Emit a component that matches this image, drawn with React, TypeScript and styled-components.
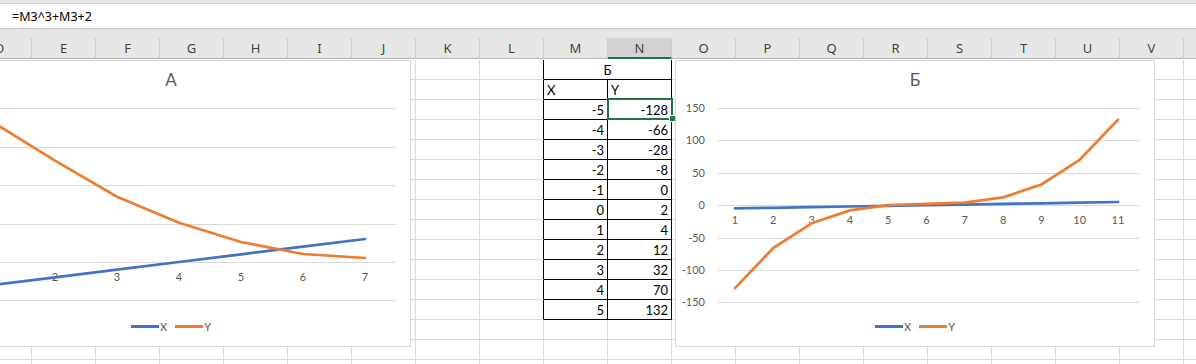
import React from "react";
import styled, { createGlobalStyle } from "styled-components";

const GlobalStyle = createGlobalStyle`
  html, body { margin: 0; padding: 0; background: #ffffff; overflow: hidden; }
  #root { width: 1196px; height: 364px; overflow: hidden; }
`;

const BLUE = "#4472c4";
const ORANGE = "#ed7d31";
const GREEN = "#217346";

const COLS = ["D", "E", "F", "G", "H", "I", "J", "K", "L", "M", "N", "O", "P", "Q", "R", "S", "T", "U", "V", "W"];
const ROW_COUNT = 16;
const SELECTED_COL = "N";

const Window = styled.div`
  width: 1196px;
  height: 364px;
  display: flex;
  flex-direction: column;
  background: #e6e6e6;
  overflow: hidden;
  font-family: "Noto Sans", "Liberation Sans", sans-serif;
`;

const FormulaBar = styled.div`
  box-sizing: border-box;
  margin-top: 3px;
  height: 26px;
  background: #ffffff;
  border-top: 1px solid #d4d4d4;
  border-bottom: 1px solid #c6c6c6;
  display: flex;
  align-items: center;
  padding-left: 12px;
  font-size: 12.5px;
  color: #000;
`;

const HeaderRow = styled.div`
  margin-top: 9px;
  display: flex;
  margin-left: -32px;
`;

const HeaderCell = styled.div<{ $selected?: boolean }>`
  box-sizing: border-box;
  flex: 0 0 64px;
  height: 21px;
  display: flex;
  align-items: center;
  justify-content: center;
  font-size: 13px;
  color: #444444;
  background: ${(p) => (p.$selected ? "#d2d2d2" : "#e6e6e6")};
  border-right: 1px solid #cdcdcd;
  border-bottom: ${(p) => (p.$selected ? `2px solid ${GREEN}` : "1px solid #b9b9b9")};
  padding-top: ${(p) => (p.$selected ? "1px" : "0")};
`;

const GridArea = styled.div`
  position: relative;
  flex: 1;
  background: #ffffff;
  padding-top: 1px;
  overflow: hidden;
`;

const Grid = styled.div`
  display: grid;
  grid-template-columns: repeat(${COLS.length}, 64px);
  grid-auto-rows: 20px;
  margin-left: -32px;
`;

const Cell = styled.div<{
  $align?: "left" | "right" | "center";
  $darkRight?: boolean;
  $darkBottom?: boolean;
  $span?: number;
  $selected?: boolean;
}>`
  box-sizing: border-box;
  position: relative;
  grid-column: span ${(p) => p.$span ?? 1};
  display: flex;
  align-items: flex-end;
  justify-content: ${(p) => (p.$align === "right" ? "flex-end" : p.$align === "center" ? "center" : "flex-start")};
  padding: 0 3px 1px 3px;
  font-family: Lato, "Liberation Sans", sans-serif;
  font-size: 13px;
  line-height: 16px;
  color: #000;
  border-right: 1px solid ${(p) => (p.$darkRight ? "#000" : "#dadada")};
  border-bottom: 1px solid ${(p) => (p.$darkBottom ? "#000" : "#dadada")};

  ${(p) =>
    p.$selected &&
    `
    &::after {
      content: "";
      position: absolute;
      left: -1px;
      top: -2px;
      right: -2px;
      bottom: -1px;
      border: 2px solid ${GREEN};
      z-index: 2;
      pointer-events: none;
    }
    &::before {
      content: "";
      position: absolute;
      box-sizing: border-box;
      width: 7px;
      height: 7px;
      right: -5px;
      bottom: -3px;
      background: ${GREEN};
      border: 1px solid #ffffff;
      z-index: 3;
    }
  `}
`;

/* ---------- chart ---------- */

const ChartFrame = styled.div<{ $left: number }>`
  position: absolute;
  top: 1px;
  left: ${(p) => p.$left}px;
  box-sizing: border-box;
  width: 480px;
  height: 287px;
  background: #ffffff;
  border: 1px solid #d9d9d9;
  padding-top: 9px;
  display: flex;
  flex-direction: column;
  align-items: center;
  z-index: 4;
  font-family: Lato, "Liberation Sans", sans-serif;
`;

const ChartTitle = styled.div`
  height: 20px;
  line-height: 20px;
  font-size: 17px;
  color: #595959;
`;

const PlotSvg = styled.svg`
  display: block;
  flex: 0 0 auto;
`;

const Legend = styled.div`
  margin-top: 8px;
  height: 16px;
  display: flex;
  align-items: center;
  gap: 8px;
  font-size: 11px;
  color: #595959;
`;

const LegendItem = styled.div`
  display: flex;
  align-items: center;
  gap: 1px;
`;

const Swatch = styled.span<{ $color: string }>`
  display: inline-block;
  width: 28px;
  height: 3px;
  background: ${(p) => p.$color};
`;

type Series = { name: string; color: string; values: number[] };

type ChartSpec = {
  title: string;
  left: number;
  categories: string[];
  x0: number;
  step: number;
  zeroY: number;
  pxPerUnit: number;
  grid: number[];
  gridX1: number;
  gridX2: number;
  valueLabels: boolean;
  labelX: number;
  series: Series[];
};

const PLOT_W = 478;
const PLOT_H = 220;

function Chart({ spec }: { spec: ChartSpec }) {
  const xOf = (i: number) => spec.x0 + spec.step * i;
  const yOf = (v: number) => spec.zeroY - v * spec.pxPerUnit;
  return (
    <ChartFrame $left={spec.left}>
      <ChartTitle>{spec.title}</ChartTitle>
      <PlotSvg width={PLOT_W} height={PLOT_H} viewBox={`0 0 ${PLOT_W} ${PLOT_H}`}>
        {spec.grid.map((g) => (
          <line
            key={`g${g}`}
            x1={spec.gridX1}
            x2={spec.gridX2}
            y1={Math.round(yOf(g)) + 0.5}
            y2={Math.round(yOf(g)) + 0.5}
            stroke="#d9d9d9"
            strokeWidth={1}
          />
        ))}
        {spec.valueLabels &&
          spec.grid.map((g) => (
            <text
              key={`v${g}`}
              x={spec.labelX}
              y={yOf(g) + 4}
              textAnchor="end"
              fontSize={11}
              fill="#595959"
              fontFamily="Lato, 'Liberation Sans', sans-serif"
            >
              {g}
            </text>
          ))}
        {spec.categories.map((c, i) => (
          <text
            key={`c${c}`}
            x={xOf(i)}
            y={spec.zeroY + 19}
            textAnchor="middle"
            fontSize={11}
            fill="#595959"
            fontFamily="Lato, 'Liberation Sans', sans-serif"
          >
            {c}
          </text>
        ))}
        {spec.series.map((s) => (
          <polyline
            key={s.name}
            points={s.values.map((v, i) => `${xOf(i).toFixed(1)},${yOf(v).toFixed(1)}`).join(" ")}
            fill="none"
            stroke={s.color}
            strokeWidth={2.75}
            strokeLinecap="round"
            strokeLinejoin="round"
          />
        ))}
      </PlotSvg>
      <Legend>
        {spec.series.map((s) => (
          <LegendItem key={s.name}>
            <Swatch $color={s.color} />
            <span>{s.name}</span>
          </LegendItem>
        ))}
      </Legend>
    </ChartFrame>
  );
}

const chartA: ChartSpec = {
  title: "A",
  left: -69,
  categories: ["1", "2", "3", "4", "5", "6", "7"],
  x0: 61,
  step: 62,
  zeroY: 172,
  pxPerUnit: 7.68,
  grid: [20, 15, 10, 5, 0, -5],
  gridX1: 30,
  gridX2: 464,
  valueLabels: false,
  labelX: 24,
  series: [
    { name: "X", color: BLUE, values: [-3, -2, -1, 0, 1, 2, 3] },
    { name: "Y", color: ORANGE, values: [18.2, 13.2, 8.5, 5.1, 2.6, 1.04, 0.52] },
  ],
};

const xs = [-5, -4, -3, -2, -1, 0, 1, 2, 3, 4, 5];
const ys = xs.map((x) => x * x * x + x + 2);

const chartB: ChartSpec = {
  title: "Б",
  left: 675,
  categories: xs.map((_, i) => String(i + 1)),
  x0: 59,
  step: 38.3,
  zeroY: 115.2,
  pxPerUnit: 0.648,
  grid: [150, 100, 50, 0, -50, -100, -150],
  gridX1: 41,
  gridX2: 464,
  valueLabels: true,
  labelX: 29,
  series: [
    { name: "X", color: BLUE, values: xs },
    { name: "Y", color: ORANGE, values: ys },
  ],
};

/* ---------- sheet cells ---------- */

const TABLE_LEFT = COLS.indexOf("M");
const TABLE_RIGHT = COLS.indexOf("N");
const TABLE_ROWS = 13;

function cellContent(row: number, col: string): { text: string; align: "left" | "right" | "center" } | null {
  if (row === 2 && col === "M") return { text: "X", align: "left" };
  if (row === 2 && col === "N") return { text: "Y", align: "left" };
  if (row >= 3 && row <= 13) {
    const i = row - 3;
    if (col === "M") return { text: String(xs[i]), align: "right" };
    if (col === "N") return { text: String(ys[i]), align: "right" };
  }
  return null;
}

function SheetCells() {
  const cells: React.ReactNode[] = [];
  for (let r = 1; r <= ROW_COUNT; r++) {
    for (let c = 0; c < COLS.length; c++) {
      const col = COLS[c];
      const inTableRow = r <= TABLE_ROWS;
      if (r === 1 && col === "M") {
        cells.push(
          <Cell key={`${r}-${col}`} $span={2} $align="center" $darkRight $darkBottom>
            Б
          </Cell>
        );
        c++;
        continue;
      }
      const inTable = inTableRow && c >= TABLE_LEFT && c <= TABLE_RIGHT;
      const darkRight = inTableRow && c >= TABLE_LEFT - 1 && c <= TABLE_RIGHT;
      const content = cellContent(r, col);
      cells.push(
        <Cell
          key={`${r}-${col}`}
          $align={content?.align}
          $darkRight={darkRight}
          $darkBottom={inTable}
          $selected={r === 3 && col === "N"}
        >
          {content?.text}
        </Cell>
      );
    }
  }
  return <Grid>{cells}</Grid>;
}

export default function App() {
  return (
    <>
      <GlobalStyle />
      <Window>
        <FormulaBar>=M3^3+M3+2</FormulaBar>
        <HeaderRow>
          {COLS.map((c) => (
            <HeaderCell key={c} $selected={c === SELECTED_COL}>
              {c}
            </HeaderCell>
          ))}
        </HeaderRow>
        <GridArea>
          <SheetCells />
          <Chart spec={chartA} />
          <Chart spec={chartB} />
        </GridArea>
      </Window>
    </>
  );
}
